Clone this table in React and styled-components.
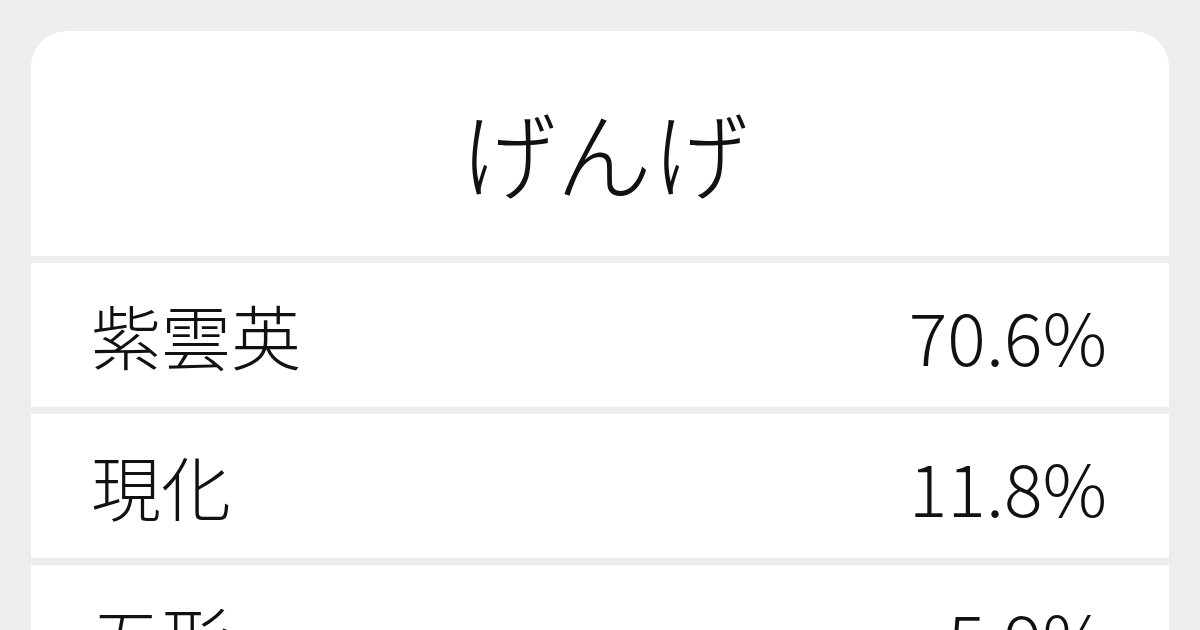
import React from 'react';
import styled, { createGlobalStyle } from 'styled-components';

const Global = createGlobalStyle`
    body {
        margin: 0;
        background: #ededed;
        font-family: "Noto Sans CJK JP", "Noto Sans", sans-serif;
        color: #111;
    }
`;

const Page = styled.div`
    width: 1200px;
    height: 630px;
    padding: 31px 31px 0;
    box-sizing: border-box;
    overflow: hidden;
`;

const Card = styled.div`
    display: flex;
    flex-direction: column;
    gap: 7px;
    border-radius: 36px 36px 0 0;
    overflow: hidden;
`;

const Header = styled.h1`
    margin: 0;
    height: 225px;
    background: #fff;
    display: flex;
    align-items: center;
    justify-content: center;
    padding: 14px 0 0 8px;
    box-sizing: border-box;
    font-size: 96px;
    font-weight: 300;
    line-height: 1;
`;

const Row = styled.div`
    height: 144px;
    background: #fff;
    display: flex;
    align-items: center;
    justify-content: space-between;
    padding: 0 62px 0 60px;
    font-size: 70px;
    font-weight: 300;
    line-height: 1;
`;

const Rate = styled.span`
    font-size: 72px;
`;

const rows = [
    { word: '紫雲英', rate: '70.6%' },
    { word: '現化', rate: '11.8%' },
    { word: '五形', rate: '5.9%' },
];

export default () => <>
    <Global />
    <Page>
        <Card>
            <Header>げんげ</Header>
            {rows.map(r => <Row key={r.word}>
                <span>{r.word}</span>
                <Rate>{r.rate}</Rate>
            </Row>)}
        </Card>
    </Page>
</>;
